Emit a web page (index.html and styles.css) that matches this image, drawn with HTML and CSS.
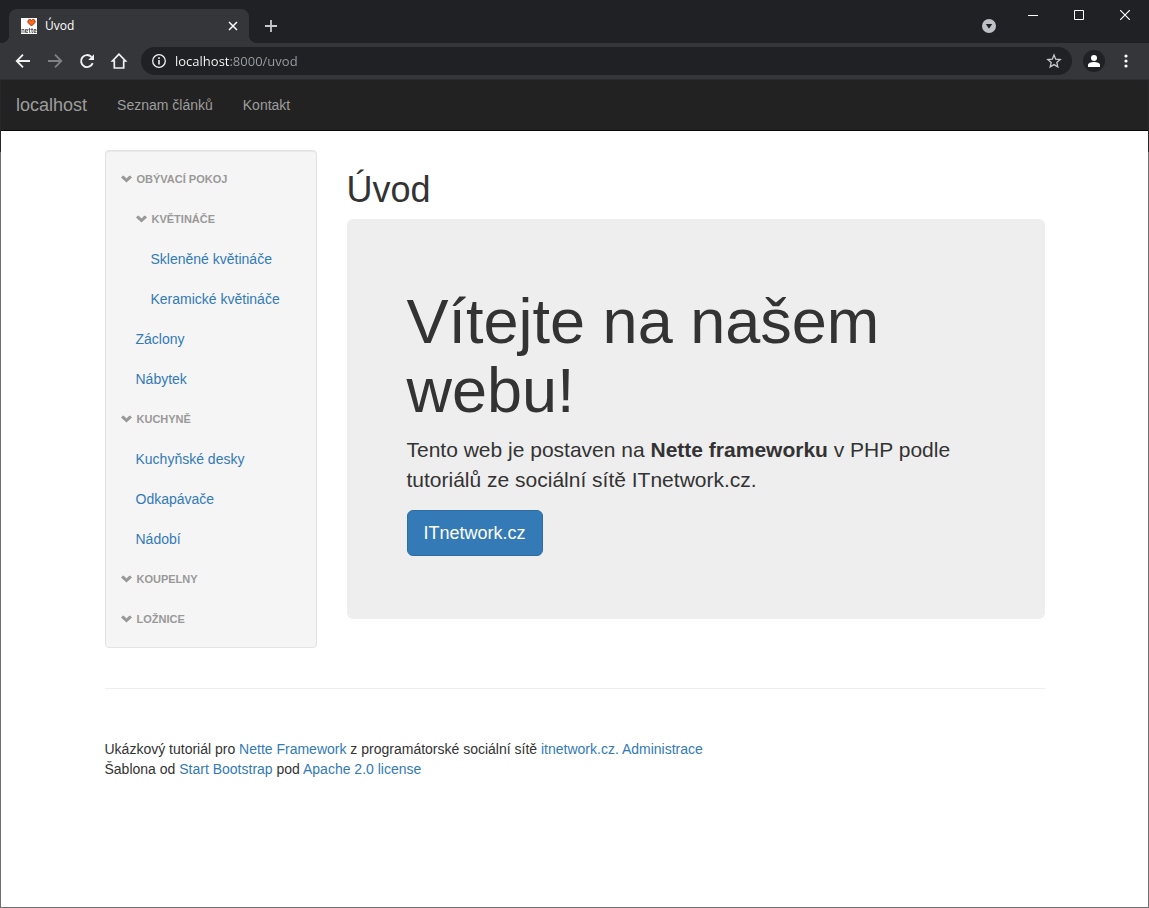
FILE: index.html
```html
<!DOCTYPE html>
<html lang="cs">
<head>
<meta charset="utf-8">
<meta name="viewport" content="width=device-width, initial-scale=1">
<title>Úvod</title>
<link rel="stylesheet" href="styles.css">
</head>
<body>
<svg class="symbols" aria-hidden="true">
  <symbol id="chevron" viewBox="0 0 12 11"><path d="M0 3.500 2 1.500 3.300 2.300 5.500 4.400 7.700 2.300 9 1.500 11 3.500 5.500 8.600z" fill="currentColor"/></symbol>
</svg>
<div class="window">
  <header class="chrome">
    <div class="tabstrip">
      <div class="tab">
        <svg class="favicon" viewBox="0 0 16 16" aria-hidden="true">
          <path d="M0 0h16v16H0z" fill="#fff"/>
          <path d="M10.500 8 7 4.500V2.500L8.300 1.500h1.200l1 1 1-1h1.200L14 2.500v2z" fill="#f76b1c" stroke="#b8260d" stroke-width="1"/>
          <path d="M1 15v-4M1 11.500h2V15M6.500 13v-1.500h-2v3h2.500M8.500 10v4.500h1M7.500 11.500h2M11 10v4.500h1M10 11.500h2M15 13v-1.500h-2v3h2.500M4.500 13h2M13 13h2" fill="none" stroke="#444" stroke-width=".8"/>
        </svg>
        <span class="tab-title">Úvod</span>
        <button class="icon-button tab-close" aria-label="Zavřít kartu"><svg width="10" height="10" viewBox="0 0 10 10"><path d="m1 1 8 8m0-8L1 9" stroke="#fff" stroke-width="1.500"/></svg></button>
      </div>
      <button class="icon-button new-tab" aria-label="Nová karta"><svg width="12" height="12" viewBox="0 0 12 12"><path d="M6 0v12M0 6h12" stroke="#c7c9cc" stroke-width="1.800"/></svg></button>
      <button class="icon-button tab-search" aria-label="Hledat karty"><svg width="14" height="14" viewBox="0 0 14 14"><circle cx="7" cy="7" r="7" fill="#bdc1c6"/><path d="M3.800 5h6.400L7 9.700z" fill="#202124"/></svg></button>
      <div class="window-controls">
        <button class="icon-button control" aria-label="Minimalizovat"><svg width="10" height="10" viewBox="0 0 10 10"><path d="M0 5.500h10" stroke="#fff"/></svg></button>
        <button class="icon-button control" aria-label="Maximalizovat"><svg width="10" height="10" viewBox="0 0 10 10"><path d="M.5.5h9v9h-9z" fill="none" stroke="#fff"/></svg></button>
        <button class="icon-button control" aria-label="Zavřít"><svg width="10" height="10" viewBox="0 0 10 10"><path d="m0 0 10 10m0-10L0 10" stroke="#fff" stroke-width="1.200"/></svg></button>
      </div>
    </div>
    <div class="toolbar">
      <button class="icon-button tool" aria-label="Zpět"><svg width="16" height="16" viewBox="0 0 16 16"><path d="M15 8H2.500M8 1.700 1.700 8 8 14.300" fill="none" stroke="#f1f1f2" stroke-width="1.800"/></svg></button>
      <button class="icon-button tool" aria-label="Vpřed" disabled><svg width="16" height="16" viewBox="0 0 16 16"><path d="M1 8h12.500M8 1.700 14.300 8 8 14.300" fill="none" stroke="#808184" stroke-width="1.800"/></svg></button>
      <button class="icon-button tool" aria-label="Obnovit"><svg width="16" height="16" viewBox="0 0 16 16"><path d="M13.700 10.200A6 6 0 1 1 12.400 3.900" fill="none" stroke="#f1f1f2" stroke-width="1.900"/><path d="M15 1.200V7H9.200z" fill="#f1f1f2"/></svg></button>
      <button class="icon-button tool" aria-label="Domů"><svg width="18" height="18" viewBox="0 0 18 18"><path d="M9 2.200 2.500 9H4.300v7h9.400V9h1.800z" fill="none" stroke="#f1f1f2" stroke-width="1.700"/></svg></button>
      <div class="omnibox">
        <svg width="14" height="14" viewBox="0 0 14 14" aria-hidden="true"><circle cx="7" cy="7" r="6.300" fill="none" stroke="#f1f1f2" stroke-width="1.300"/><path d="M7 6v4.500M7 3.300v1.600" stroke="#f1f1f2" stroke-width="1.600"/></svg>
        <input class="address" type="text" value="localhost:8000/uvod" aria-label="Adresa">
        <button class="icon-button star" aria-label="Přidat záložku"><svg width="16" height="16" viewBox="0 0 16 16"><path d="m8 2 1.700 4.200 4.500.4-3.400 2.900 1 4.400L8 11.600l-3.800 2.300 1-4.400-3.400-2.900 4.500-.4z" fill="none" stroke="#c7c9cc" stroke-width="1.300"/></svg></button>
      </div>
      <button class="icon-button profile" aria-label="Profil"><svg width="12" height="12" viewBox="0 0 12 12"><circle cx="6" cy="3" r="3" fill="#fff"/><path d="M0 12v-2c0-2 3-3 6-3s6 1 6 3v2z" fill="#fff"/></svg></button>
      <button class="icon-button menu" aria-label="Nabídka"><svg width="4" height="14" viewBox="0 0 4 14"><circle cx="2" cy="2" r="1.600" fill="#fff"/><circle cx="2" cy="7" r="1.600" fill="#fff"/><circle cx="2" cy="12" r="1.600" fill="#fff"/></svg></button>
    </div>
  </header>

  <div class="page">
    <nav class="navbar">
      <a class="brand" href="#">localhost</a>
      <a class="nav-link" href="#">Seznam článků</a>
      <a class="nav-link" href="#">Kontakt</a>
    </nav>
    <div class="container">
      <div class="row">
        <aside class="well">
          <ul class="tree">
            <li><button class="toggler"><svg class="chevron"><use href="#chevron"/></svg>Obývací pokoj</button>
              <ul class="tree">
                <li><button class="toggler"><svg class="chevron"><use href="#chevron"/></svg>Květináče</button>
                  <ul class="tree">
                    <li><a class="tree-link" href="#">Skleněné květináče</a></li>
                    <li><a class="tree-link" href="#">Keramické květináče</a></li>
                  </ul>
                </li>
                <li><a class="tree-link" href="#">Záclony</a></li>
                <li><a class="tree-link" href="#">Nábytek</a></li>
              </ul>
            </li>
            <li><button class="toggler"><svg class="chevron"><use href="#chevron"/></svg>Kuchyně</button>
              <ul class="tree">
                <li><a class="tree-link" href="#">Kuchyňské desky</a></li>
                <li><a class="tree-link" href="#">Odkapávače</a></li>
                <li><a class="tree-link" href="#">Nádobí</a></li>
              </ul>
            </li>
            <li><button class="toggler"><svg class="chevron"><use href="#chevron"/></svg>Koupelny</button></li>
            <li><button class="toggler"><svg class="chevron"><use href="#chevron"/></svg>Ložnice</button></li>
          </ul>
        </aside>
        <main class="content">
          <h1 class="title">Úvod</h1>
          <section class="jumbotron">
            <h2 class="welcome">Vítejte na našem webu!</h2>
            <p class="lead">Tento web je postaven na <strong>Nette frameworku</strong> v PHP podle tutoriálů ze sociální sítě ITnetwork.cz.</p>
            <a class="button-primary" href="#">ITnetwork.cz</a>
          </section>
        </main>
      </div>
      <hr class="divider">
      <footer class="footer">
        <p>Ukázkový tutoriál pro <a href="#">Nette Framework</a> z programátorské sociální sítě <a href="#">itnetwork.cz. </a><a href="#">Administrace</a><br>Šablona od <a href="#">Start Bootstrap</a> pod <a href="#">Apache 2.0 license</a></p>
      </footer>
    </div>
  </div>
</div>
</body>
</html>
```

FILE: styles.css
```css
* {
  box-sizing: border-box;
}

body {
  margin: 0;
  font: 14px/20px "Liberation Sans", Arial, sans-serif;
  color: #333;
}

a {
  color: #337ab7;
  text-decoration: none;
}

button {
  font: inherit;
  border: 0;
  padding: 0;
  background: none;
}

.symbols {
  display: none;
}

.window {
  display: flex;
  flex-direction: column;
  min-height: 100vh;
  padding: 0 1px 1px;
  background: linear-gradient(#25272a 152px, #707070 152px);
}

/* Browser frame */
.chrome {
  margin: 0 -1px;
  background: #202124;
  border-bottom: 1px solid #2b2c2f;
}

.icon-button {
  display: flex;
  align-items: center;
  justify-content: center;
  flex: none;
}

.tabstrip {
  display: flex;
  height: 43px;
  padding-left: 9px;
}

.tab {
  position: relative;
  display: flex;
  align-items: center;
  width: 240px;
  margin-top: 9px;
  padding: 0 8px 0 12px;
  background: #35363a;
  border-radius: 8px 8px 0 0;
}

.tab::before,
.tab::after {
  content: "";
  position: absolute;
  bottom: 0;
  width: 8px;
  height: 8px;
}

.tab::before {
  right: 100%;
  background: radial-gradient(circle at 0 0, transparent 8px, #35363a 8px);
}

.tab::after {
  left: 100%;
  background: radial-gradient(circle at 100% 0, transparent 8px, #35363a 8px);
}

.favicon {
  width: 16px;
  height: 16px;
}

.tab-title {
  flex: 1;
  margin-left: 8px;
  font: 12px/16px "Open Sans", "Noto Sans", sans-serif;
  color: #fff;
}

.tab-close {
  width: 16px;
  height: 16px;
}

.new-tab {
  width: 28px;
  height: 28px;
  margin: 12px auto 0 8px;
}

.tab-search {
  width: 28px;
  height: 28px;
  margin: 12px 7px 0 0;
}

.window-controls {
  display: flex;
  padding-right: 1px;
}

.control {
  width: 46px;
  height: 30px;
}

.toolbar {
  display: flex;
  align-items: center;
  height: 36px;
  padding: 0 9px 0 7px;
  background: #35363a;
}

.tool {
  width: 32px;
  height: 32px;
}

.omnibox {
  display: flex;
  flex: 1;
  align-items: center;
  height: 28px;
  margin-left: 6px;
  padding: 0 10px 0 11px;
  background: #202124;
  border-radius: 14px;
}

.address {
  flex: 1;
  min-width: 0;
  margin-left: 9px;
  padding: 0;
  border: 0;
  outline: 0;
  font: 13px/20px "Open Sans", "Noto Sans", sans-serif;
  color: transparent;
  background: linear-gradient(90deg, #fff 55px, #9aa0a6 55px);
  background-clip: text;
  -webkit-background-clip: text;
}

.star {
  width: 16px;
  height: 16px;
}

.profile {
  width: 22px;
  height: 22px;
  margin-left: 11px;
  border-radius: 50%;
  background: #202124;
}

.menu {
  width: 28px;
  height: 28px;
  margin-left: 7px;
}

/* Site */
.page {
  flex: 1;
  background: #fff;
}

.navbar {
  display: flex;
  height: 51px;
  background: #222;
  border-bottom: 1px solid #080808;
}

.brand,
.nav-link {
  padding: 15px;
  color: #9d9d9d;
}

.brand {
  font-size: 18px;
}

.container {
  max-width: 970px;
  margin: 0 auto;
  padding: 0 15px;
}

.row {
  display: flex;
  align-items: flex-start;
  gap: 30px;
  padding-top: 19px;
}

.well {
  flex: 0 0 212px;
  padding: 8px 0;
  background: #f5f5f5;
  border: 1px solid #e3e3e3;
  border-radius: 4px;
  box-shadow: inset 0 1px 1px rgba(0, 0, 0, .05);
}

.tree {
  margin: 0;
  padding: 0 0 0 15px;
  list-style: none;
}

.toggler,
.tree-link {
  display: flex;
  align-items: center;
  height: 40px;
}

.toggler {
  gap: 4px;
  font-size: 11px;
  font-weight: bold;
  text-transform: uppercase;
  color: #999;
}

.chevron {
  width: 12px;
  height: 11px;
}

.content {
  flex: 1;
  min-width: 0;
}

.title {
  margin: 20px 0 9px;
  font-size: 36px;
  font-weight: normal;
  line-height: 40px;
}

.jumbotron {
  padding: 68px 60px 63px;
  background: #eee;
  border-radius: 6px;
}

.welcome {
  margin: 0 0 10px;
  font-size: 63px;
  font-weight: normal;
  line-height: 69px;
}

.lead {
  margin: 0 0 15px;
  font-size: 21px;
  line-height: 30px;
}

.button-primary {
  display: inline-block;
  padding: 10px 16px;
  border: 1px solid #2e6da4;
  border-radius: 6px;
  background: #337ab7;
  font-size: 18px;
  line-height: 24px;
  color: #fff;
  vertical-align: top;
}

.divider {
  margin: 40px 0 50px;
  border: 0;
  border-top: 1px solid #eee;
}

.footer p {
  margin: 0;
}
```
